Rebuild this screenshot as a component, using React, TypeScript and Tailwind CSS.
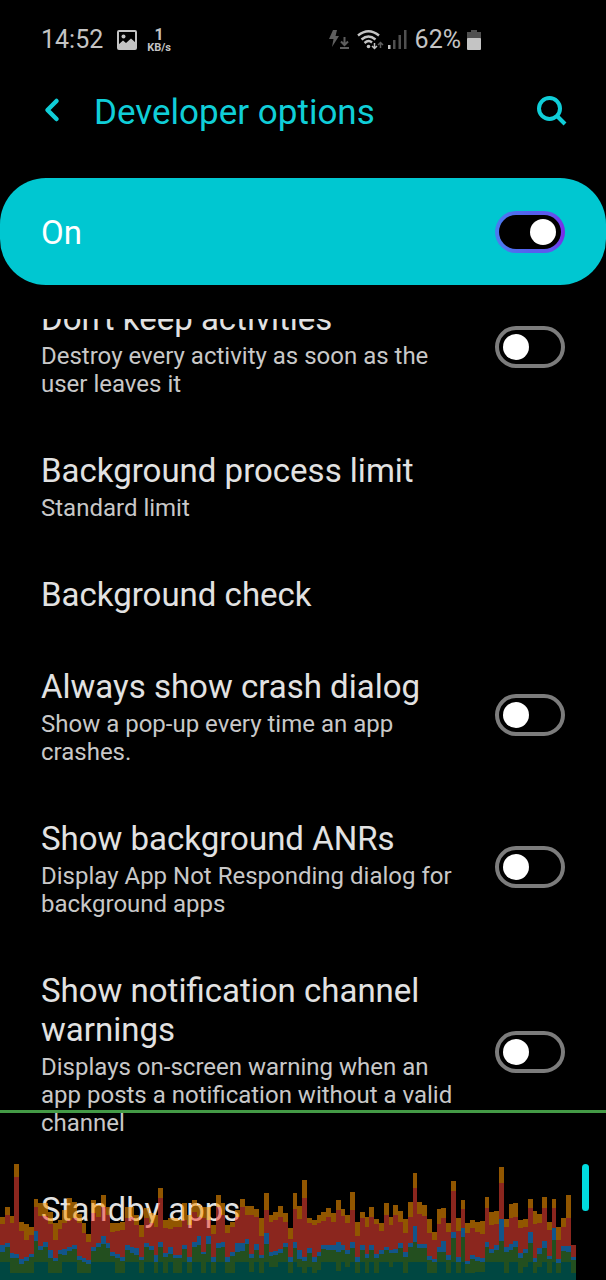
import React, { useState } from 'react';
import { ChevronLeft } from 'lucide-react';

interface OptionItem {
  id: string;
  title: string;
  summary?: string;
  hasSwitch?: boolean;
}

const options: OptionItem[] = [
  {
    id: 'dont-keep-activities',
    title: "Don't keep activities",
    summary: 'Destroy every activity as soon as the user leaves it',
    hasSwitch: true,
  },
  { id: 'process-limit', title: 'Background process limit', summary: 'Standard limit' },
  { id: 'background-check', title: 'Background check' },
  {
    id: 'crash-dialog',
    title: 'Always show crash dialog',
    summary: 'Show a pop-up every time an app crashes.',
    hasSwitch: true,
  },
  {
    id: 'background-anrs',
    title: 'Show background ANRs',
    summary: 'Display App Not Responding dialog for background apps',
    hasSwitch: true,
  },
  {
    id: 'channel-warnings',
    title: 'Show notification channel warnings',
    summary: 'Displays on-screen warning when an app posts a notification without a valid channel',
    hasSwitch: true,
  },
  { id: 'standby-apps', title: 'Standby apps' },
];

// One entry per frame: top of the orange, red, blue, green and teal segment,
// measured downwards in a 570 unit tall plot.
const frames: number[][] = [
  [380, 403, 466, 486, 516], [350, 375, 458, 470, 516], [378, 400, 490, 503, 550], [222, 260, 492, 504, 550],
  [396, 422, 508, 521, 550], [401, 450, 502, 513, 550], [410, 436, 492, 502, 550], [327, 352, 423, 452, 516],
  [340, 378, 468, 480, 516], [340, 378, 456, 472, 516], [365, 402, 480, 505, 550], [400, 450, 503, 513, 550],
  [390, 418, 481, 493, 550], [360, 400, 478, 494, 516], [325, 390, 470, 484, 516], [335, 385, 465, 477, 516],
  [372, 400, 498, 511, 550], [400, 430, 503, 515, 550], [433, 455, 511, 522, 550], [330, 370, 470, 484, 516],
  [345, 380, 458, 472, 516], [316, 350, 438, 462, 516], [350, 375, 460, 475, 516], [400, 425, 486, 498, 516],
  [400, 422, 492, 505, 550], [395, 420, 502, 513, 550], [350, 385, 466, 480, 516], [350, 380, 472, 490, 516],
  [375, 405, 474, 495, 516], [405, 440, 500, 511, 550], [355, 385, 460, 472, 516], [370, 400, 468, 480, 516],
  [375, 410, 495, 516, 550], [294, 325, 457, 470, 516], [390, 415, 490, 502, 550], [385, 418, 472, 492, 516],
  [385, 410, 496, 503, 550], [390, 410, 494, 503, 550], [340, 390, 466, 478, 516], [375, 405, 502, 515, 550],
  [330, 365, 457, 470, 516], [345, 380, 438, 465, 516], [350, 385, 485, 492, 550], [350, 390, 438, 462, 516],
  [405, 432, 500, 515, 550], [315, 350, 460, 473, 516], [340, 375, 457, 470, 516], [405, 430, 500, 515, 550],
  [395, 410, 485, 498, 550], [360, 380, 460, 485, 516], [327, 350, 460, 483, 516], [347, 375, 448, 462, 516],
  [347, 375, 492, 503, 545], [358, 380, 463, 480, 516], [385, 437, 496, 505, 550], [308, 360, 430, 463, 516],
  [375, 397, 486, 498, 530], [365, 390, 482, 495, 530], [347, 380, 476, 490, 516], [370, 396, 460, 472, 516],
  [415, 446, 500, 516, 550], [310, 358, 457, 475, 516], [347, 386, 480, 508, 530], [271, 325, 500, 513, 550],
  [383, 400, 475, 488, 530], [390, 405, 500, 515, 550], [375, 400, 485, 498, 540], [367, 393, 466, 478, 516],
  [355, 382, 466, 480, 516], [370, 395, 466, 480, 516], [331, 360, 455, 485, 542], [357, 378, 466, 480, 516],
  [376, 400, 480, 491, 530], [307, 360, 457, 475, 516], [396, 437, 502, 516, 550], [366, 385, 466, 480, 516],
  [382, 412, 493, 505, 550], [351, 380, 466, 480, 516], [387, 403, 492, 503, 550], [400, 422, 480, 493, 516],
  [340, 375, 470, 480, 516], [382, 405, 480, 490, 530], [345, 375, 476, 488, 516], [363, 395, 460, 473, 516],
  [388, 430, 487, 500, 550], [335, 380, 460, 472, 516], [249, 295, 408, 457, 516], [337, 372, 462, 475, 516],
  [345, 378, 462, 475, 516], [387, 430, 498, 510, 550], [427, 450, 506, 517, 550], [358, 402, 470, 485, 516],
  [353, 385, 452, 487, 516], [398, 425, 496, 510, 550], [274, 303, 427, 445, 516], [383, 423, 502, 515, 550],
  [331, 358, 415, 440, 516], [400, 430, 512, 523, 550], [390, 415, 496, 508, 550], [395, 425, 500, 513, 545],
  [393, 432, 503, 515, 545], [322, 353, 457, 470, 516], [366, 405, 478, 490, 516], [362, 402, 466, 480, 516],
  [231, 278, 388, 452, 516], [387, 412, 472, 487, 550], [342, 383, 462, 480, 516], [340, 380, 452, 470, 516],
  [390, 413, 490, 505, 550], [387, 412, 477, 490, 530], [327, 355, 427, 460, 516], [362, 402, 503, 515, 550],
  [372, 400, 475, 492, 530], [321, 353, 452, 473, 516], [395, 420, 497, 508, 550], [328, 355, 415, 450, 516],
  [412, 450, 508, 520, 550], [385, 410, 467, 482, 516], [316, 385, 467, 485, 516], [465, 465, 502, 510, 550],
];

const segmentColors = ['#ff9800', '#f44336', '#2196f3', '#3e8c38', '#007d72'];

const PLOT_TOP = 210;
const PLOT_BOTTOM = 570;

const FrameChart: React.FC = () => (
  <svg
    className="block h-[120px] w-[95%] opacity-[0.57]"
    viewBox={`0 ${PLOT_TOP} ${frames.length} ${PLOT_BOTTOM - PLOT_TOP}`}
    preserveAspectRatio="none"
    shapeRendering="crispEdges"
    aria-hidden="true"
  >
    {frames.map((tops, x) =>
      tops.map((y, s) => (
        <rect
          key={`${x}-${s}`}
          x={x}
          y={y}
          width={1}
          height={(tops[s + 1] ?? PLOT_BOTTOM) - y}
          fill={segmentColors[s]}
        />
      ))
    )}
  </svg>
);

interface SwitchProps {
  id: string;
  checked: boolean;
  onChange: () => void;
  label: string;
}

const Switch: React.FC<SwitchProps> = ({ id, checked, onChange, label }) => (
  <input
    id={id}
    type="checkbox"
    role="switch"
    aria-label={label}
    checked={checked}
    onChange={onChange}
    className="flex h-[42px] w-[70px] shrink-0 appearance-none items-center rounded-full border-4 border-[#7c7c7c] px-1 before:size-[26px] before:rounded-full before:bg-white checked:justify-end checked:border-transparent checked:px-[5px] checked:[background:linear-gradient(#000,#000)_padding-box,linear-gradient(90deg,#4a7cf0,#5560ee_50%,#5f58ee_80%,#7a2be8)_border-box]"
  />
);

const StatusBar: React.FC = () => (
  <div className="flex h-[78px] shrink-0 items-center justify-between pl-[41px] pr-[125px] pt-[2px] text-[#c4c4c4]">
    <div className="flex items-center">
      <span className="text-[25px] leading-8">14:52</span>
      <svg className="ml-[14px] size-5" viewBox="0 0 20 20" aria-hidden="true">
        <rect x="1" y="1" width="18" height="18" rx="1" fill="none" stroke="currentColor" strokeWidth="2" />
        <circle cx="6.5" cy="6.5" r="2" fill="currentColor" />
        <path d="M1 15 L6 10.5 L9 13 L14 8.5 L19 13 V19 H1 Z" fill="currentColor" />
      </svg>
      <div className="ml-[10px] flex flex-col items-center font-bold">
        <span className="text-base leading-4">1</span>
        <span className="text-[11px] leading-[10px]">KB/s</span>
      </div>
    </div>

    <div className="flex items-center">
      <svg className="h-5 w-[21px] text-[#5e5e5e]" viewBox="0 0 21 20" aria-hidden="true">
        <path d="M4 0 H8 L6.5 6 H10 L3 17 L4.5 9 H0 Z" fill="currentColor" />
        <path d="M15.5 7 V15 M12 11.5 L15.5 15 L19 11.5 M11 18 H20" fill="none" stroke="currentColor" strokeWidth="2" />
      </svg>
      <svg className="ml-[7px] h-5 w-[27px]" viewBox="0 0 27 20" aria-hidden="true">
        <g fill="none" stroke="currentColor" strokeWidth="2.4">
          <path d="M1 5.5 Q11.5 -3 22 5.5" />
          <path d="M4.5 9.5 Q11.5 3.5 18.5 9.5" />
          <path d="M7.5 13 Q11.5 9.5 15 12.5" />
        </g>
        <circle cx="11.5" cy="16.5" r="1.8" fill="currentColor" />
        <path d="M17.5 13 V18.5 M15 16 L17.5 18.5 L20 16" fill="none" stroke="currentColor" strokeWidth="1.5" />
        <path d="M23.5 18 V12.5 M21 15 L23.5 12.5 L26 15" fill="none" stroke="#5e5e5e" strokeWidth="1.5" />
      </svg>
      <svg className="ml-1 h-5 w-[19px]" viewBox="0 0 19 20" aria-hidden="true">
        <rect x="0" y="15" width="2.5" height="4" fill="currentColor" />
        <g fill="#505050">
          <rect x="5" y="10" width="2.5" height="9" />
          <rect x="10.5" y="5" width="2.5" height="14" />
          <rect x="16" y="0" width="2.5" height="19" />
        </g>
      </svg>
      <span className="ml-2 text-[25px] leading-8">62%</span>
      <svg className="ml-[6px] h-5 w-[14px]" viewBox="0 0 14 20" aria-hidden="true">
        <path d="M4 0 H10 V2 H14 V9 H0 V2 H4 Z" fill="#505050" />
        <rect y="8" width="14" height="12" rx="1" fill="currentColor" />
      </svg>
    </div>
  </div>
);

const OptionRow: React.FC<{ item: OptionItem }> = ({ item }) => {
  const [enabled, setEnabled] = useState(false);

  return (
    <li className="flex items-center gap-6 px-[41px] pb-[27px] pt-[26px]">
      <label htmlFor={item.hasSwitch ? item.id : undefined} className="flex-1">
        <span className="block text-[33px] leading-[39px] text-[#e2e2e2]">{item.title}</span>
        {item.summary && (
          <span className="mt-1 block text-2xl leading-7 text-[#c8c8c8]">{item.summary}</span>
        )}
      </label>
      {item.hasSwitch ? (
        <div className="mb-1">
          <Switch id={item.id} label={item.title} checked={enabled} onChange={() => setEnabled(!enabled)} />
        </div>
      ) : null}
    </li>
  );
};

export default function App() {
  const [developerMode, setDeveloperMode] = useState(true);

  return (
    <div className="relative flex h-screen flex-col overflow-hidden bg-black font-[Roboto,sans-serif]">
      <StatusBar />

      {/* Title bar */}
      <header className="flex h-[100px] shrink-0 items-start pl-[34px] pr-[39px] pt-3 text-[#10ced8]">
        <button type="button" aria-label="Back" className="mt-[2px]">
          <ChevronLeft className="size-9" strokeWidth={3} />
        </button>
        <h1 className="ml-6 flex-1 text-[35px] leading-[46px]">Developer options</h1>
        <button type="button" aria-label="Search" className="mt-[5px]">
          <svg className="size-[31px]" viewBox="0 0 31 31" fill="none" stroke="currentColor" strokeWidth="4" aria-hidden="true">
            <circle cx="13.5" cy="13.5" r="10.5" />
            <path d="M21 21 L29 29" />
          </svg>
        </button>
      </header>

      {/* Master switch */}
      <div className="flex h-[107px] shrink-0 items-center justify-between rounded-[46px] bg-[#00c7d1] px-[41px]">
        <label htmlFor="developer-mode" className="pt-[2px] text-[33px] leading-[39px] text-white">
          {developerMode ? 'On' : 'Off'}
        </label>
        <Switch
          id="developer-mode"
          label="Developer options"
          checked={developerMode}
          onChange={() => setDeveloperMode(!developerMode)}
        />
      </div>

      {/* Option list, scrolled part way into its first row */}
      <main className="mt-[34px] min-h-0 flex-1 overflow-hidden">
        <ul className="-mt-[46px]">
          {options.map((item) => (
            <OptionRow key={item.id} item={item} />
          ))}
        </ul>
      </main>

      {/* Scroll thumb */}
      <div className="absolute bottom-[69px] right-[17px] h-[47px] w-[7px] rounded-full bg-[#00dce0]" />

      {/* Frame timing overlay */}
      <div className="pointer-events-none absolute inset-x-0 bottom-0">
        <div className="mb-[47px] h-[3px] bg-[#449a46]" />
        <FrameChart />
      </div>
    </div>
  );
}
